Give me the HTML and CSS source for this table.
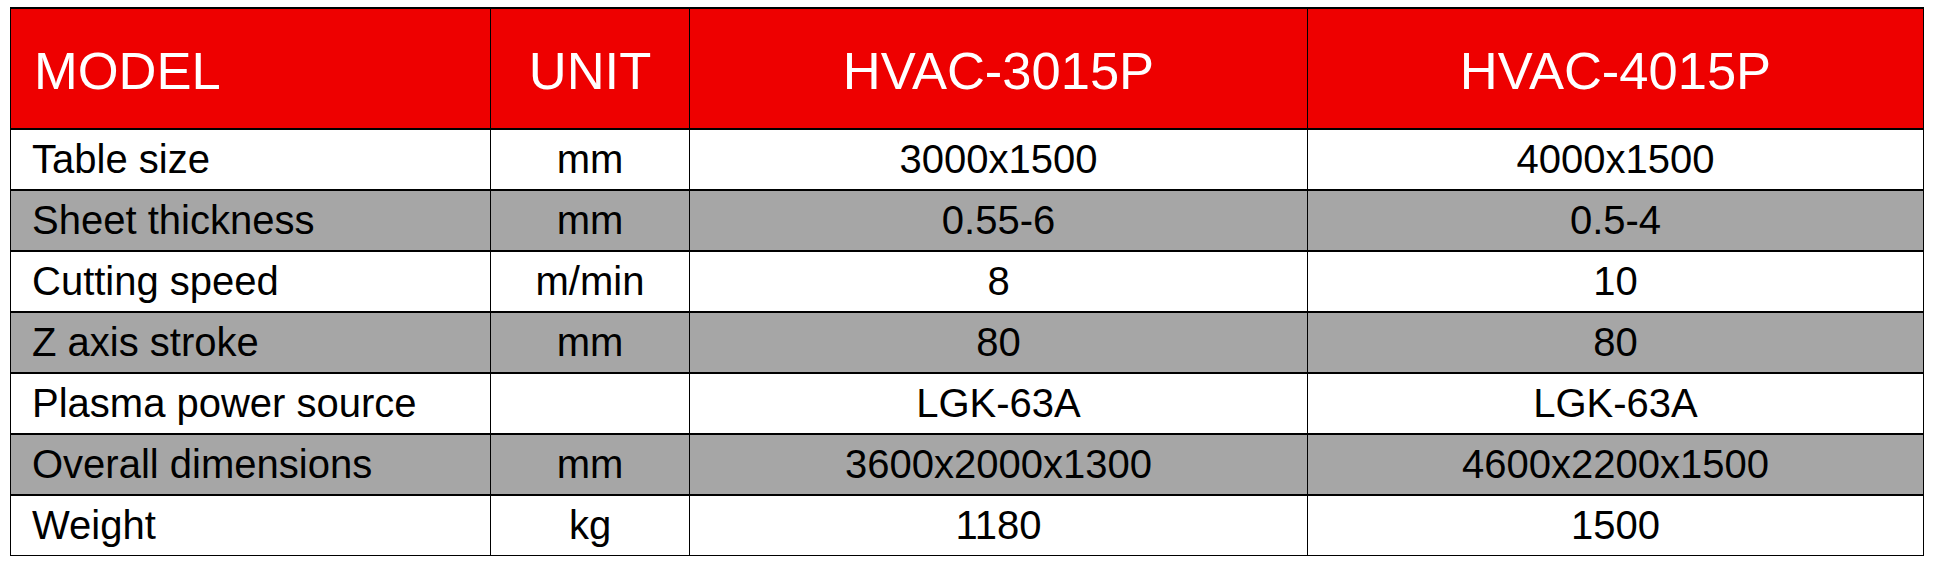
FILE: index.html
```html
<!DOCTYPE html>
<html lang="en">
<head>
<meta charset="utf-8">
<title>HVAC Plasma Specifications</title>
<link rel="stylesheet" href="styles.css">
</head>
<body>
<table class="spec">
  <thead>
    <tr>
      <th class="c-name">MODEL</th>
      <th class="c-unit">UNIT</th>
      <th class="c-val">HVAC-3015P</th>
      <th class="c-val c-last">HVAC-4015P</th>
    </tr>
  </thead>
  <tbody>
    <tr><td class="name">Table size</td><td>mm</td><td>3000x1500</td><td>4000x1500</td></tr>
    <tr class="alt"><td class="name">Sheet thickness</td><td>mm</td><td>0.55-6</td><td>0.5-4</td></tr>
    <tr><td class="name">Cutting speed</td><td>m/min</td><td>8</td><td>10</td></tr>
    <tr class="alt"><td class="name">Z axis stroke</td><td>mm</td><td>80</td><td>80</td></tr>
    <tr><td class="name">Plasma power source</td><td></td><td>LGK-63A</td><td>LGK-63A</td></tr>
    <tr class="alt"><td class="name">Overall dimensions</td><td>mm</td><td>3600x2000x1300</td><td>4600x2200x1500</td></tr>
    <tr class="last"><td class="name">Weight</td><td>kg</td><td>1180</td><td>1500</td></tr>
  </tbody>
</table>
</body>
</html>
```

FILE: styles.css
```css
html, body {
  margin: 0;
  padding: 0;
  background: #ffffff;
}

body {
  padding: 7px 0 0 10px;
  font-family: "Liberation Sans", Arial, sans-serif;
}

.spec {
  border-collapse: separate;
  border-spacing: 0;
  table-layout: fixed;
  width: 1914px;
  border-top: 2px solid #000;
  border-left: 1px solid #000;
}

.spec th,
.spec td {
  box-sizing: border-box;
  padding: 0;
  border-right: 1px solid #000;
  border-bottom: 2px solid #000;
  text-align: center;
  vertical-align: middle;
  white-space: nowrap;
}

.spec th {
  height: 121px;
  background: #ee0000;
  color: #ffffff;
  font-weight: normal;
  font-size: 52.5px;
  padding-top: 3px;
}

.spec th.c-name {
  width: 480px;
  text-align: left;
  padding-left: 23px;
}

.spec th.c-unit {
  width: 199px;
}

.spec th.c-val {
  width: 618px;
}

.spec th.c-last {
  width: 616px;
}

.spec td {
  height: 61px;
  font-size: 40px;
  color: #000;
  background: #ffffff;
  padding-bottom: 1px;
}

.spec td.name {
  text-align: left;
  padding-left: 21px;
}

.spec tr.alt td {
  background: #a6a6a6;
}

.spec tr.last td {
  height: 60px;
  border-bottom-width: 1px;
}
```
